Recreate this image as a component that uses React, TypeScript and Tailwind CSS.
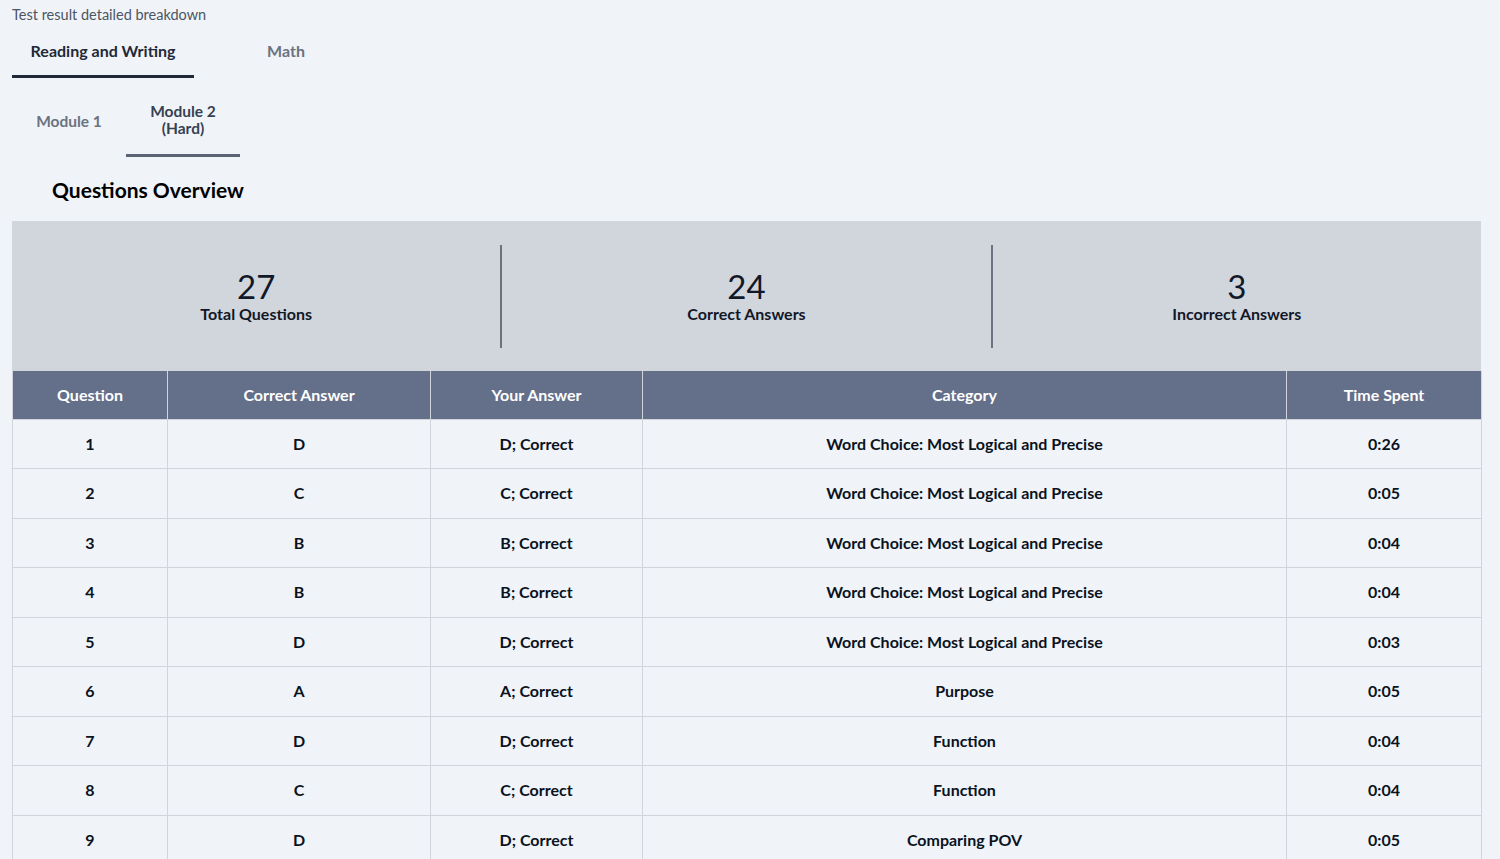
import React from 'react';

const ROWS = [
  { q: 1, correct: 'D', yours: 'D; Correct', category: 'Word Choice: Most Logical and Precise', time: '0:26' },
  { q: 2, correct: 'C', yours: 'C; Correct', category: 'Word Choice: Most Logical and Precise', time: '0:05' },
  { q: 3, correct: 'B', yours: 'B; Correct', category: 'Word Choice: Most Logical and Precise', time: '0:04' },
  { q: 4, correct: 'B', yours: 'B; Correct', category: 'Word Choice: Most Logical and Precise', time: '0:04' },
  { q: 5, correct: 'D', yours: 'D; Correct', category: 'Word Choice: Most Logical and Precise', time: '0:03' },
  { q: 6, correct: 'A', yours: 'A; Correct', category: 'Purpose', time: '0:05' },
  { q: 7, correct: 'D', yours: 'D; Correct', category: 'Function', time: '0:04' },
  { q: 8, correct: 'C', yours: 'C; Correct', category: 'Function', time: '0:04' },
  { q: 9, correct: 'D', yours: 'D; Correct', category: 'Comparing POV', time: '0:05' },
];

const STATS = [
  { value: '27', label: 'Total Questions' },
  { value: '24', label: 'Correct Answers' },
  { value: '3', label: 'Incorrect Answers' },
];

const COLS = [
  { name: 'Question', w: 'w-[155px]' },
  { name: 'Correct Answer', w: 'w-[263px]' },
  { name: 'Your Answer', w: 'w-[212px]' },
  { name: 'Category', w: 'w-[644px]' },
  { name: 'Time Spent', w: 'w-[195px]' },
];

export default function App() {
  return (
    <div className="h-[859px] overflow-hidden bg-[#f0f4f9] px-3 text-[#1f2937]" style={{ fontFamily: 'Lato, "Noto Sans", sans-serif' }}>
      <div className="pt-[6px] text-[14.5px] leading-[18px] text-[#4b5563]">Test result detailed breakdown</div>

      {/* section tabs */}
      <div className="mt-[9px] flex">
        <div className="flex h-[45px] w-[182px] items-start justify-center border-b-[3px] border-[#1f2937] pt-[6px] text-[16px] font-bold text-[#1f2937]">
          Reading and Writing
        </div>
        <div className="flex h-[45px] w-[184px] items-start justify-center pt-[6px] text-[16px] font-bold text-[#6b7280]">
          Math
        </div>
      </div>

      {/* module tabs */}
      <div className="mt-[23px] flex">
        <div className="flex h-[56px] w-[114px] items-center justify-center pb-[15px] text-[15.5px] font-bold leading-[17px] text-[#6b7280]">
          Module 1
        </div>
        <div className="flex h-[56px] w-[114px] flex-col items-center justify-center border-b-[3px] border-[#5b6475] pb-[15px] text-center text-[15.5px] font-bold leading-[17px] text-[#374151]">
          <span>Module 2</span>
          <span>(Hard)</span>
        </div>
      </div>

      <h2 className="ml-10 mt-[21px] text-[21px] font-bold leading-6 text-black">Questions Overview</h2>

      <div className="mt-[19px] w-[1469px]">
        {/* stats */}
        <div className="flex h-[150px] items-center bg-[#d1d5dc]">
          {STATS.map((s, i) => (
            <div
              key={s.label}
              className={`flex h-[103px] flex-1 flex-col items-center justify-center ${i > 0 ? 'border-l-2 border-[#6b7280]' : ''}`}
            >
              <div className="text-[33px] leading-9 text-[#111827]">{s.value}</div>
              <div className="text-[16px] font-bold leading-5 text-[#111827]">{s.label}</div>
            </div>
          ))}
        </div>

        {/* table */}
        <table className="w-full table-fixed border-collapse text-center text-[16px]">
          <thead>
            <tr className="h-[48px] bg-[#64708a] text-white">
              {COLS.map((c) => (
                <th key={c.name} className={`${c.w} border-x border-[#d1d5db] font-bold`}>
                  {c.name}
                </th>
              ))}
            </tr>
          </thead>
          <tbody>
            {ROWS.map((r) => (
              <tr key={r.q} className="h-[49.5px] font-bold text-[#0b1220]">
                <td className="border border-[#d1d5db]">{r.q}</td>
                <td className="border border-[#d1d5db]">{r.correct}</td>
                <td className="border border-[#d1d5db]">{r.yours}</td>
                <td className="border border-[#d1d5db]">{r.category}</td>
                <td className="border border-[#d1d5db]">{r.time}</td>
              </tr>
            ))}
          </tbody>
        </table>
      </div>
    </div>
  );
}
